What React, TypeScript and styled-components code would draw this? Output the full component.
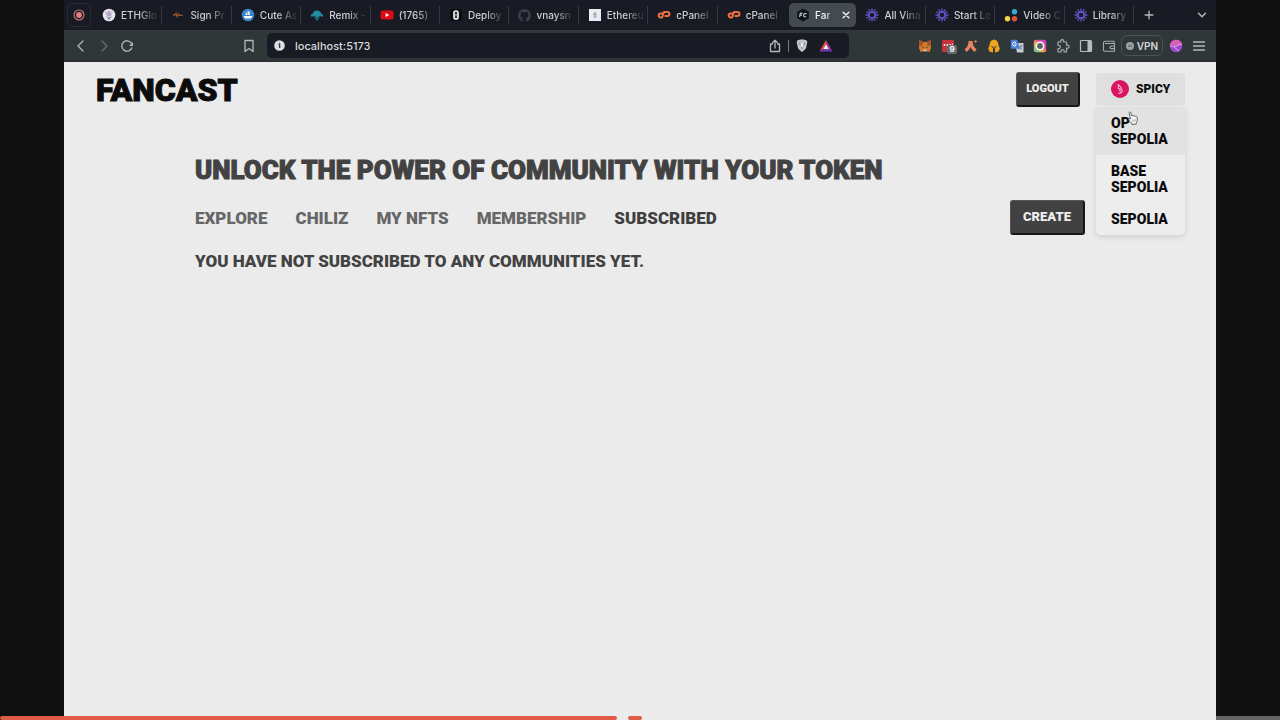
import React from "react";
import styled, { createGlobalStyle, css } from "styled-components";
import { FaGithub } from "react-icons/fa";

const GlobalStyle = createGlobalStyle`
  *, *::before, *::after { box-sizing: border-box; }
  body { margin: 0; background: #101010; }
  button, input { font: inherit; color: inherit; }
  button { padding: 0; border: 0; background: none; cursor: pointer; }
  h1, h2, p, ul { margin: 0; padding: 0; }
  ul { list-style: none; }
  svg { display: block; flex: none; }
`;

const Stage = styled.div`
  position: relative;
  display: flex;
  min-height: 100vh;
  padding: 0 5%;
  background: #101010;
  overflow: hidden;
`;

const BrowserWindow = styled.div`
  flex: 1;
  min-width: 0;
  display: flex;
  flex-direction: column;
  background: #ebebeb;
`;

/* Browser chrome */

const TabStrip = styled.div`
  display: flex;
  align-items: center;
  height: 30px;
  padding-left: 3px;
  background: #181b24;
  color: #cdcfd3;
  font: 500 10px/16px Inter, "Liberation Sans", sans-serif;
`;

const PinnedTab = styled.button`
  display: grid;
  place-items: center;
  width: 24px;
  height: 24px;
  margin-right: 3px;
  border: 1px solid #292c34;
  border-radius: 5px;
`;

const TabItem = styled.button<{ $active?: boolean; $line?: boolean }>`
  flex: 1;
  min-width: 0;
  height: 24px;
  display: flex;
  align-items: center;
  gap: 5px;
  margin: 0 1px;
  padding: 0 4px 0 7px;
  text-align: left;
  border-right: 1px solid transparent;
  ${(p) => p.$line && css`
    height: 18px;
    border-right-color: #353841;
  `}
  ${(p) => p.$active && css`
    background: #434b50;
    border-radius: 5px;
    color: #f0f2f3;
  `}
`;

const TabLabel = styled.span`
  flex: 1;
  min-width: 0;
  white-space: nowrap;
  mask-image: linear-gradient(to right, #000 50%, rgba(0, 0, 0, 0.2) 90%);
`;

const StripEnd = styled.div`
  display: flex;
  align-items: center;
  justify-content: space-between;
  width: 81px;
  padding: 0 8px;
`;

const IconButton = styled.button`
  display: grid;
  place-items: center;
  color: #b4b9bc;
`;

const Toolbar = styled.div`
  display: flex;
  align-items: center;
  height: 32px;
  padding: 0 10px;
  border-top: 1px solid #353a42;
  border-bottom: 2px solid #2b3034;
  background: #303738;
  color: #b4b9bc;
`;

const NavGroup = styled.div`
  display: flex;
  align-items: center;
  gap: 9px;
  width: 168px;
`;

const AddressBar = styled.form`
  flex: 1;
  min-width: 0;
  display: flex;
  align-items: center;
  gap: 9px;
  height: 25px;
  margin-left: 11px;
  padding: 0 15px 0 6px;
  border-radius: 5px;
  background: #181b23;
`;

const AddressInput = styled.input`
  flex: 1;
  min-width: 0;
  padding: 0;
  border: 0;
  outline: 0;
  background: none;
  color: #d8dadd;
  font: 500 11px/16px Inter, "Liberation Sans", sans-serif;
`;

const Divider = styled.span`
  width: 1px;
  height: 12px;
  margin: 0 -3px;
  background: #777b82;
`;

const Extensions = styled.div`
  display: flex;
  align-items: center;
  gap: 9px;
  margin-left: 69px;
`;

const ExtensionButton = styled(IconButton)`
  position: relative;
`;

const Badge = styled.span`
  position: absolute;
  left: 6px;
  top: 6px;
  width: 10px;
  height: 9px;
  border-radius: 2px;
  background: #666c70;
  color: #fff;
  font: 700 8px/9px Inter, sans-serif;
  text-align: center;
`;

const VpnButton = styled.button`
  display: flex;
  align-items: center;
  justify-content: center;
  gap: 3px;
  width: 42px;
  height: 21px;
  margin: 0 -3px 0 -4px;
  border: 1px solid #4b5254;
  border-radius: 6px;
  color: #d4d7d9;
  font: 600 10px/14px Inter, sans-serif;
`;

/* Site */

const Site = styled.div`
  flex: 1;
  color: #424242;
  font-family: Roboto, "Liberation Sans", sans-serif;
  font-weight: 900;
  text-transform: uppercase;
`;

const SiteHeader = styled.header`
  display: flex;
  align-items: flex-start;
  justify-content: space-between;
  padding: 10px 31px 0 32px;
`;

const Brand = styled.h1`
  color: #0c0c0c;
  font-size: 32px;
  line-height: 36px;
  font-weight: 900;
  -webkit-text-stroke: 1px currentColor;
`;

const HeaderActions = styled.div`
  display: flex;
  gap: 16px;
`;

const SolidButton = styled.button<{ $large?: boolean }>`
  height: 35px;
  min-width: ${(p) => (p.$large ? 75 : 64)}px;
  border: 1px solid #555;
  border-right: 2px solid #171717;
  border-bottom: 2px solid #171717;
  border-radius: 3px;
  background: #414141;
  color: #ededed;
  font-size: ${(p) => (p.$large ? 13 : 11)}px;
  line-height: 16px;
  font-weight: 900;
  text-transform: uppercase;
`;

const NetworkPicker = styled.div`
  position: relative;
  width: 89px;
  margin-top: 1px;
  color: #0c0c0c;
`;

const NetworkButton = styled.button`
  display: flex;
  align-items: center;
  gap: 7px;
  width: 100%;
  height: 32px;
  padding: 0 15px;
  border-radius: 3px;
  background: #dfdfdf;
  font-size: 12px;
  line-height: 16px;
  text-transform: uppercase;
`;

const NetworkMenu = styled.ul`
  position: absolute;
  z-index: 1;
  top: 100%;
  left: 0;
  right: 0;
  overflow: hidden;
  border-radius: 0 0 5px 5px;
  background: #ededed;
  box-shadow: 0 2px 6px rgba(0, 0, 0, 0.12);
`;

const NetworkOption = styled.button<{ $hovered?: boolean }>`
  display: block;
  width: 100%;
  padding: 8px 15px;
  background: ${(p) => (p.$hovered ? "#e2e2e2" : "transparent")};
  font-size: 14px;
  line-height: 16px;
  text-align: left;
  text-transform: uppercase;
`;

const Pointer = styled.svg`
  position: absolute;
  z-index: 2;
  top: 38px;
  left: 32px;
`;

const Content = styled.main`
  max-width: 890px;
  margin: 0 auto;
  padding-top: 46px;
`;

const Headline = styled.h2`
  font-size: 26px;
  line-height: 32px;
  font-weight: 900;
  -webkit-text-stroke: 1px currentColor;
`;

const SectionBar = styled.div`
  display: flex;
  align-items: center;
  justify-content: space-between;
  margin-top: 14px;
`;

const SectionTabs = styled.nav`
  display: flex;
  gap: 28px;
`;

const SectionTab = styled.button<{ $active?: boolean }>`
  color: ${(p) => (p.$active ? "#3e3e3e" : "#666")};
  font-size: 17px;
  line-height: 24px;
  text-transform: uppercase;
`;

const EmptyNote = styled.p`
  margin-top: 14px;
  font-size: 17px;
  line-height: 24px;
`;

/* Video progress laid over the recording */

const ProgressTrack = styled.div`
  position: absolute;
  left: 0;
  right: 0;
  bottom: 0;
  display: flex;
  gap: 11px;
  height: 4px;
  background: linear-gradient(to right, transparent 95%, #666 95%);
`;

const Played = styled.span<{ $width: string }>`
  width: ${(p) => p.$width};
  border-radius: 2px;
  background: #e05a48;
`;

type IconKind =
  | "eth" | "sign" | "sea" | "remix" | "youtube" | "deploy" | "github"
  | "etherscan" | "cpanel" | "fc" | "sun" | "dots";

const Favicon = ({ kind }: { kind: IconKind }) => {
  if (kind === "github") return <FaGithub size={13} color="#3f424a" />;
  return (
    <svg width="14" height="14" viewBox="0 0 14 14" aria-hidden="true">
      {kind === "eth" && (
        <>
          <circle cx="7" cy="7" r="6.300" fill="#e8e5ec" />
          <path d="M7 2 4 7l3 1.800L10 7Z" fill="#b2a6c6" />
          <path d="m4 8 3 4 3-4-3 1.800Z" fill="#777b9d" />
          <circle cx="10" cy="4" r="1" fill="#efb0c4" />
          <circle cx="4" cy="4.500" r="1" fill="#99c7c0" />
        </>
      )}
      {kind === "sign" && (
        <path d="M2 7h2l1-1.500L6.200 8.600 7.400 6l1 1.400h3.400" fill="none" stroke="#9b5527" strokeWidth="1.300" />
      )}
      {kind === "sea" && (
        <>
          <circle cx="7" cy="7" r="6.300" fill="#3c83ce" />
          <path d="M6.400 3v4H4.200ZM7.200 2.800c1.600 1 2.200 2.600 1.400 4.200H7.200ZM2.800 8h8.500c-.5 1.700-1.400 2.600-2.700 2.600H5C3.600 10.600 3 9.500 2.800 8Z" fill="#fff" />
        </>
      )}
      {kind === "remix" && (
        <>
          <path d="M2.500 7a4.500 4.500 0 0 1 9 0L7 10Z" fill="#238ca0" />
          <circle cx="2.200" cy="7.400" r="1.300" fill="#238ca0" />
          <circle cx="11.800" cy="7.400" r="1.300" fill="#238ca0" />
          <path d="m3.500 8.500 3.500 2 3.500-2L7 13Z" fill="#1b7487" />
        </>
      )}
      {kind === "youtube" && (
        <>
          <rect x=".5" y="2.500" width="13" height="9" rx="2.300" fill="#dc0b18" />
          <path d="m5.700 5 3.500 2-3.500 2Z" fill="#fff" />
        </>
      )}
      {kind === "deploy" && (
        <>
          <rect x="1" y="1" width="12" height="12" rx="2" fill="#0b0c0e" />
          <rect x="5" y="3" width="4" height="8" rx="2" fill="none" stroke="#eee" strokeWidth="1.700" />
          <path d="M7 5.500v3" stroke="#eee" />
        </>
      )}
      {kind === "etherscan" && (
        <>
          <path d="M1 1h12v12H1Z" fill="#e9edf2" />
          <path d="m7 3.500-2 3.300L7 8l2-1.200Z" fill="#8db0a1" />
          <path d="m5 7.500 2 3 2-3-2 1.200Z" fill="#7b8fce" />
          <path d="m7 3.500 2 3.300-2-.8Z" fill="#e7b277" />
        </>
      )}
      {kind === "cpanel" && (
        <g fill="none" stroke="#ed7040" strokeWidth="2" strokeLinecap="round" strokeLinejoin="round">
          <path d="M6 5.400H3.700a2 2 0 1 0 0 4.100H5.100L7 3.900h3.400a2 2 0 0 1 0 4.100H8.300" />
        </g>
      )}
      {kind === "fc" && (
        <>
          <path d="m7 .6 5.800 3.200v6.400L7 13.400 1.200 10.200V3.800Z" fill="#111417" />
          <path d="M3.600 9 4.300 5.400h2.200M4 7.200h2M10.600 5.600H9.300c-1.100 0-1.600.7-1.700 1.600-.1 1 .4 1.500 1.300 1.500h1.300" fill="none" stroke="#c9cdd0" strokeWidth="1.100" />
        </>
      )}
      {kind === "sun" && (
        <g stroke="#6656cf" strokeWidth="1.300" strokeLinecap="round">
          {Array.from({ length: 12 }, (_, i) => (
            <path key={i} d="M7 1v2.500" transform={`rotate(${i * 30} 7 7)`} />
          ))}
          <circle cx="7" cy="7" r="3" fill="none" />
        </g>
      )}
      {kind === "dots" && (
        <>
          <circle cx="10.500" cy="3.800" r="2.700" fill="#35add4" />
          <circle cx="3.500" cy="10.700" r="2.700" fill="#f2d34b" />
          <circle cx="10.500" cy="10.700" r="2.700" fill="#df5234" />
        </>
      )}
    </svg>
  );
};

const tabs: { kind: IconKind; label: string; active?: boolean; line?: boolean }[] = [
  { kind: "eth", label: "ETHGlo", line: true },
  { kind: "sign", label: "Sign Pr", line: true },
  { kind: "sea", label: "Cute As", line: true },
  { kind: "remix", label: "Remix -", line: true },
  { kind: "youtube", label: "(1765)", line: true },
  { kind: "deploy", label: "Deploy", line: true },
  { kind: "github", label: "vnaysn", line: true },
  { kind: "etherscan", label: "Ethereu", line: true },
  { kind: "cpanel", label: "cPanel", line: true },
  { kind: "cpanel", label: "cPanel" },
  { kind: "fc", label: "Far", active: true },
  { kind: "sun", label: "All Vina", line: true },
  { kind: "sun", label: "Start Lo", line: true },
  { kind: "dots", label: "Video C", line: true },
  { kind: "sun", label: "Library", line: true },
];

const Line = ({ d, size = 14, color = "currentColor", width = 1.3 }: { d: string; size?: number; color?: string; width?: number }) => (
  <svg width={size} height={size} viewBox="0 0 14 14" fill="none" stroke={color} strokeWidth={width} strokeLinecap="round" strokeLinejoin="round" aria-hidden="true">
    <path d={d} />
  </svg>
);

const extensions: { name: string; badge?: string; art: React.ReactNode }[] = [
  {
    name: "MetaMask",
    art: (
      <>
        <path d="m1 1 4.500 2h3L13 1l-.4 5 .4 3-1.500 4-3-.8H5.500l-3 .8L1 9l.4-3Z" fill="#d27a2c" />
        <path d="m1 1 4.500 2L4 7 1.400 6ZM13 1 8.500 3 10 7l2.600-1Z" fill="#a9511f" />
        <path d="m3.500 7.500 2 .5.500 1.500ZM10.500 7.500l-2 .5-.5 1.500Z" fill="#3b2b24" />
        <path d="M5.500 10.500h3l.4 1.700H5.100Z" fill="#d9c6b8" />
      </>
    ),
  },
  {
    name: "Password manager",
    badge: "9",
    art: (
      <>
        <rect x="1" y="1" width="12" height="12" rx="1" fill="#c8323a" />
        <circle cx="3.500" cy="6" r=".9" fill="#fff" />
        <circle cx="6.300" cy="6" r=".9" fill="#fff" />
        <circle cx="9.100" cy="6" r=".9" fill="#fff" />
        <path d="M11.300 4.500v3" stroke="#fff" strokeWidth=".8" />
      </>
    ),
  },
  {
    name: "Argent",
    art: (
      <>
        <path d="M4.600 2h4c.1 4 1.300 6.500 4 8.300L10.700 13C8.600 11.600 7.300 9.900 6.600 7.800 5.900 9.900 4.600 11.600 2.500 13L.6 10.300C3.300 8.500 4.500 6 4.600 2Z" fill="#e98362" />
        <path d="m11.700.3.500 1.500 1.500.5-1.500.6-.5 1.500-.5-1.500-1.500-.6 1.500-.5Z" fill="#e98362" />
      </>
    ),
  },
  {
    name: "Helmet",
    art: (
      <path d="M7 .5C3.800 1 2.500 3.500 2.600 6L1.200 9.500l1.200 3 3.600 1V9L3.800 7.500h2.400L7 10l.8-2.500h2.400L8 9v4.500l3.600-1 1.200-3L11.400 6C11.500 3.500 10.200 1 7 .5Z" fill="#eea51e" />
    ),
  },
  {
    name: "Translate",
    art: (
      <>
        <path d="M5 4h8.500v9.500H7Z" fill="#c8ced4" />
        <path d="M.8.8h6.400l2.700 9H.8Z" fill="#4a80dc" />
        <path d="M6.500 5.300H4.600M6 3.700a2 2 0 1 0 .3 2.300" fill="none" stroke="#fff" />
        <path d="M9.500 7h3M11 6v1c0 1.500-.5 2.500-1.500 3.500M9.500 8c.7 1.200 1.500 2 2.500 2.500" fill="none" stroke="#707985" strokeWidth=".8" />
      </>
    ),
  },
  {
    name: "Colour capture",
    art: (
      <>
        <defs>
          <linearGradient id="capture" x1="1" y1="0" x2="0" y2="1">
            <stop offset="0" stopColor="#b44ae0" />
            <stop offset=".35" stopColor="#e0488f" />
            <stop offset=".6" stopColor="#f0b04a" />
            <stop offset="1" stopColor="#3fc7b4" />
          </linearGradient>
        </defs>
        <rect x=".8" y=".8" width="12.400" height="12.400" rx="2" fill="url(#capture)" />
        <circle cx="7" cy="7" r="3.700" fill="#5d6468" stroke="#fff" strokeWidth="1.500" />
      </>
    ),
  },
  {
    name: "Extensions",
    art: (
      <path d="M2 3h3c-.8-1.300 0-2.300 1.200-2.300S8.300 1.700 7.500 3h3v3.300c1.300-.8 2.600 0 2.600 1.300S11.800 9.800 10.500 9v4H8c.5-1.700-.4-2.500-1.500-2.500S4.700 11.300 5 13H2V9.500c1.500.4 2.300-.5 2.300-1.700S3.500 6 2 6.400Z" fill="none" stroke="#a4aaac" strokeWidth="1.200" strokeLinejoin="round" />
    ),
  },
  {
    name: "Sidebar",
    art: (
      <>
        <rect x="1.500" y="1.500" width="11" height="11" rx="1" fill="none" stroke="#b8bdbf" strokeWidth="1.200" />
        <path d="M8.500 2h3.500v10H8.500Z" fill="#b8bdbf" />
      </>
    ),
  },
  {
    name: "Wallet",
    art: (
      <g fill="none" stroke="#a4aaac" strokeWidth="1.100" strokeLinejoin="round">
        <path d="M12 4.500V2.300H3a1.500 1.500 0 0 0-1.500 1.500V11A1.200 1.200 0 0 0 2.700 12.200H12.500V4.500H3" />
        <path d="M12.500 7H9.300a1.200 1.200 0 0 0 0 2.600h3.200" />
      </g>
    ),
  },
];

const sections = ["Explore", "Chiliz", "My NFTs", "Membership", "Subscribed"];
const networks = ["OP Sepolia", "Base Sepolia", "Sepolia"];

export default function App() {
  return (
    <Stage>
      <GlobalStyle />
      <BrowserWindow>
        <TabStrip>
          <PinnedTab aria-label="Recorder">
            <svg width="12" height="12" viewBox="0 0 12 12">
              <circle cx="6" cy="6" r="5" fill="none" stroke="#c67678" strokeWidth="1.200" />
              <circle cx="6" cy="6" r="2.900" fill="#df7f80" />
            </svg>
          </PinnedTab>
          {tabs.map((tab, i) => (
            <TabItem key={i} $active={tab.active} $line={tab.line}>
              <Favicon kind={tab.kind} />
              <TabLabel>{tab.label}</TabLabel>
              {tab.active && <Line d="m3 3 8 8M11 3l-8 8" size={10} width={2} />}
            </TabItem>
          ))}
          <StripEnd>
            <IconButton aria-label="New tab">
              <Line d="M7 2.500v9M2.500 7h9" size={12} width={1.600} />
            </IconButton>
            <IconButton aria-label="Search tabs">
              <Line d="m3 5 4 4 4-4" size={12} width={1.800} />
            </IconButton>
          </StripEnd>
        </TabStrip>

        <Toolbar>
          <NavGroup>
            <IconButton aria-label="Back"><Line d="M9 2 4 7l5 5" /></IconButton>
            <IconButton aria-label="Forward"><Line d="m5 2 5 5-5 5" color="#697073" /></IconButton>
            <IconButton aria-label="Reload">
              <svg width="14" height="14" viewBox="0 0 14 14" fill="none" stroke="currentColor" strokeWidth="1.300">
                <path d="M12 8.500A5.200 5.200 0 1 1 11.500 4.300" />
                <path d="M13 3v4H9Z" fill="currentColor" stroke="none" />
              </svg>
            </IconButton>
          </NavGroup>
          <IconButton aria-label="Bookmark"><Line d="M3 1.500h8v11L7 9.500l-4 3Z" /></IconButton>
          <AddressBar>
            <svg width="13" height="13" viewBox="0 0 14 14">
              <circle cx="7" cy="7" r="5.700" fill="#dddfe1" />
              <path d="M6 6.300h1.200v3.500M7 4v1" stroke="#22252d" strokeWidth="1.300" fill="none" />
            </svg>
            <AddressInput aria-label="Address" defaultValue="localhost:5173" />
            <IconButton type="button" aria-label="Share">
              <Line d="M4.500 5H2.500v7.500h9V5h-2M7 9V1.300M4.700 3.500 7 1.200l2.300 2.300" />
            </IconButton>
            <Divider />
            <IconButton type="button" aria-label="Shields">
              <svg width="14" height="14" viewBox="0 0 14 14">
                <path d="m4 1 1-.5h4l1 .5 1.200.1 1.200 1.900-.4 1.400L11 9.200 9.500 11 7 13 4.500 11 3 9.200 2 4.400 1.600 3l1.200-1.900Z" fill="#c2c5ca" />
                <path d="m4 3.500 1.500 4L7 8.700l1.500-1.200 1.500-4-1.700 1.200L7 4l-1.300.7Z" fill="#eeeff1" />
                <path d="m4.500 3.500.9 3.200M9.500 3.500l-.9 3.200M7 7.500v2" stroke="#6c7078" strokeWidth=".9" />
              </svg>
            </IconButton>
            <IconButton type="button" aria-label="Rewards">
              <svg width="16" height="14" viewBox="0 0 16 14">
                <path d="M8 1 1.500 12.500 5.300 10 8 5.300Z" fill="#ee4e38" />
                <path d="m8 1 6.500 11.500-3.800-2.500L8 5.300Z" fill="#a33a96" />
                <path d="M1.500 12.500h13L10.700 10H5.300Z" fill="#6b3ab9" />
                <path d="M8 5.300 10.700 10H5.300Z" fill="#f4eef8" />
              </svg>
            </IconButton>
          </AddressBar>
          <Extensions>
            {extensions.map((ext) => (
              <ExtensionButton key={ext.name} aria-label={ext.name}>
                <svg width="14" height="14" viewBox="0 0 14 14">{ext.art}</svg>
                {ext.badge && <Badge>{ext.badge}</Badge>}
              </ExtensionButton>
            ))}
            <VpnButton>
              <svg width="8" height="8" viewBox="0 0 8 8">
                <circle cx="4" cy="4" r="4" fill="#9ca2a5" />
                <path d="M2 4h4" stroke="#4d5456" />
              </svg>
              VPN
            </VpnButton>
            <IconButton aria-label="Leo">
              <svg width="14" height="14" viewBox="0 0 14 14">
                <circle cx="7" cy="7" r="6.200" fill="#9d4bd2" />
                <path d="M1 6c4 3 6 0 12-1C12 2 10 .8 7 .8S1.500 3 1 6Z" fill="#d65fb9" />
                <path d="M1 6.500c4 3 6 0 12-1.500M5 8l5 4" fill="none" stroke="#e7b6e9" strokeWidth=".8" />
              </svg>
            </IconButton>
            <IconButton aria-label="Menu"><Line d="M1.500 3h11M1.500 7h11M1.500 11h11" /></IconButton>
          </Extensions>
        </Toolbar>

        <Site>
          <SiteHeader>
            <Brand>Fancast</Brand>
            <HeaderActions>
              <SolidButton>Logout</SolidButton>
              <NetworkPicker>
                <NetworkButton aria-expanded="true">
                  <svg width="18" height="18" viewBox="0 0 18 18" aria-hidden="true">
                    <circle cx="9" cy="9" r="9" fill="#d9155f" />
                    <path d="M7.300 4.500v4l3.800 1.300c.6 1.800-.5 3.500-3.400 3.700M7.300 4.500l3 3.300-.5 1.500M8.700 9.300l.7 3.700" fill="none" stroke="#f4b5cf" strokeWidth="1.100" strokeLinecap="round" strokeLinejoin="round" />
                  </svg>
                  Spicy
                </NetworkButton>
                <NetworkMenu>
                  {networks.map((name, i) => (
                    <li key={name}>
                      <NetworkOption $hovered={i === 0}>{name}</NetworkOption>
                    </li>
                  ))}
                </NetworkMenu>
                <Pointer width="10" height="14" viewBox="0 0 10 14" aria-hidden="true">
                  <path d="M2.500 8 1.200 2.200C.9.900 2.400.500 2.800 1.700L3.900 5c.4-.9 1.600-.8 1.800.1.500-.6 1.500-.4 1.700.3.800-.4 1.600.1 1.700.9.300 2.200.4 3.800-.6 5.300l-.2 1.400-4.200.500-.5-1.300C2.300 11 1.500 10 .8 8.900.300 7.900 1.500 7.100 2.500 8Z" fill="#f4f4f4" stroke="#555" strokeWidth=".9" strokeLinejoin="round" />
                  <path d="M5 8.500v2M7 8.300v2" stroke="#777" strokeWidth=".7" />
                </Pointer>
              </NetworkPicker>
            </HeaderActions>
          </SiteHeader>
          <Content>
            <Headline>Unlock the power of community with your token</Headline>
            <SectionBar>
              <SectionTabs>
                {sections.map((name) => (
                  <SectionTab key={name} $active={name === "Subscribed"}>{name}</SectionTab>
                ))}
              </SectionTabs>
              <SolidButton $large>Create</SolidButton>
            </SectionBar>
            <EmptyNote>You have not subscribed to any communities yet.</EmptyNote>
          </Content>
        </Site>
      </BrowserWindow>
      <ProgressTrack>
        <Played $width="48.2%" />
        <Played $width="1.1%" />
      </ProgressTrack>
    </Stage>
  );
}
